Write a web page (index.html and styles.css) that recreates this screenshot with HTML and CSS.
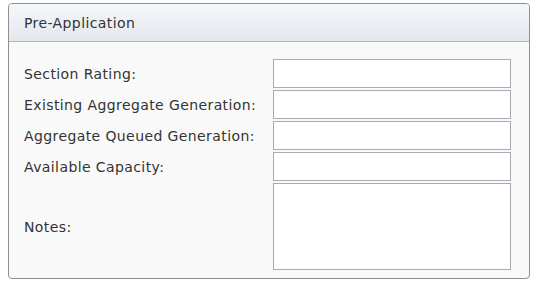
FILE: index.html
```html
<!DOCTYPE html>
<html lang="en">
<head>
  <meta charset="UTF-8" />
  <title>Pre-Application</title>
  <link rel="stylesheet" href="styles.css">
</head>
<body>
  <div class="panel">
    <div class="panel-header">Pre-Application</div>
    <form class="panel-body">
      <label for="sectionRating">Section Rating:</label>
      <input type="text" id="sectionRating">
      <label for="existingGen">Existing Aggregate Generation:</label>
      <input type="text" id="existingGen">
      <label for="queuedGen">Aggregate Queued Generation:</label>
      <input type="text" id="queuedGen">
      <label for="capacity">Available Capacity:</label>
      <input type="text" id="capacity">
      <label for="notes">Notes:</label>
      <textarea id="notes"></textarea>
    </form>
  </div>
</body>
</html>
```

FILE: styles.css
```css
* {
  box-sizing: border-box;
}
body {
  margin: 0;
  padding: 3px 10px 0 8px;
  background: #ffffff;
  font-family: "DejaVu Sans", Verdana, sans-serif;
  font-size: 14px;
  letter-spacing: 0.4px;
  color: #333333;
}
.panel {
  width: 522px;
  border: 1px solid #8e8f91;
  border-radius: 4px;
  background: #f9f9f9;
  overflow: hidden;
}
.panel-header {
  height: 38px;
  padding: 0 15px;
  display: flex;
  align-items: center;
  background: linear-gradient(#f4f7fa, #e4e8ed);
  border-bottom: 1px solid #b4b8bd;
  color: #333333;
}
.panel-body {
  display: grid;
  grid-template-columns: 1fr 238px;
  row-gap: 2px;
  padding: 17px 18px 8px 15px;
  margin: 0;
}
.panel-body label {
  display: flex;
  align-items: center;
}
input,
textarea {
  width: 238px;
  height: 29px;
  margin: 0;
  padding: 2px 4px;
  border: 1px solid #a6abb4;
  background: #ffffff;
  font-family: inherit;
  font-size: 13px;
  outline: none;
}
textarea {
  height: 87px;
  resize: none;
}
```
